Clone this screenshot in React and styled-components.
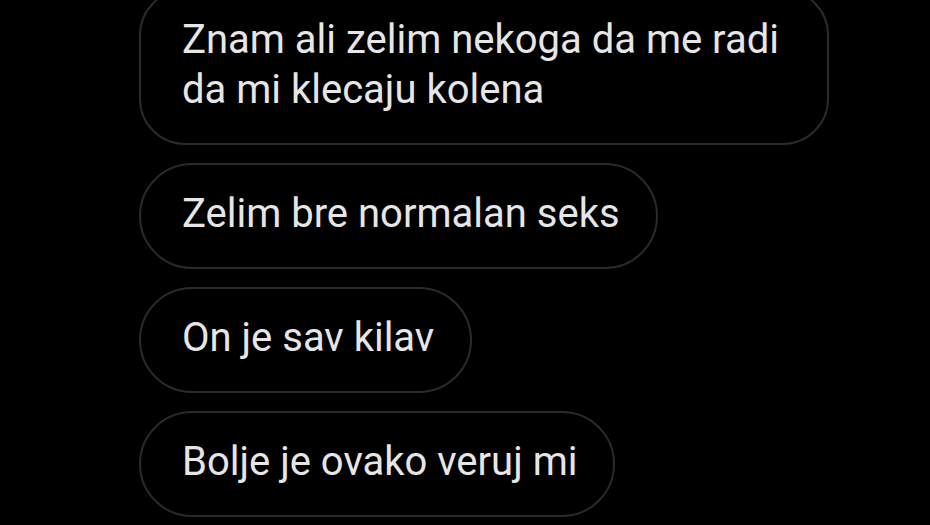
import React from "react";
import styled, { createGlobalStyle } from "styled-components";

const GlobalStyle = createGlobalStyle`
  html, body {
    margin: 0;
    padding: 0;
    background: #000;
    overflow: hidden;
  }
`;

const messages = [
  ["Znam ali zelim nekoga da me radi", "da mi klecaju kolena"],
  ["Zelim bre normalan seks"],
  ["On je sav kilav"],
  ["Bolje je ovako veruj mi"],
];

const Thread = styled.div`
  display: flex;
  flex-direction: column;
  align-items: flex-start;
  gap: 18px;
  margin-top: -11px;
  padding-left: 139px;
  width: 930px;
  box-sizing: border-box;
`;

const Bubble = styled.div`
  box-sizing: border-box;
  padding: 24px ${(p) => (p.$multi ? "48px" : "36px")} 28px 41px;
  border: 2px solid #2a2a2a;
  border-radius: ${(p) => (p.$multi ? "46px" : "54px")};
  background: #000;
  color: #e6e6e6;
  font-family: Roboto, "Liberation Sans", sans-serif;
  font-size: 40px;
  line-height: 50px;
  white-space: nowrap;
`;

const App = () => {
  return (
    <>
      <GlobalStyle />
      <Thread>
        {messages.map((lines, i) => (
          <Bubble key={i} $multi={lines.length > 1}>
            {lines.map((line, j) => (
              <React.Fragment key={j}>
                {j > 0 && <br />}
                {line}
              </React.Fragment>
            ))}
          </Bubble>
        ))}
      </Thread>
    </>
  );
};

export default App;
